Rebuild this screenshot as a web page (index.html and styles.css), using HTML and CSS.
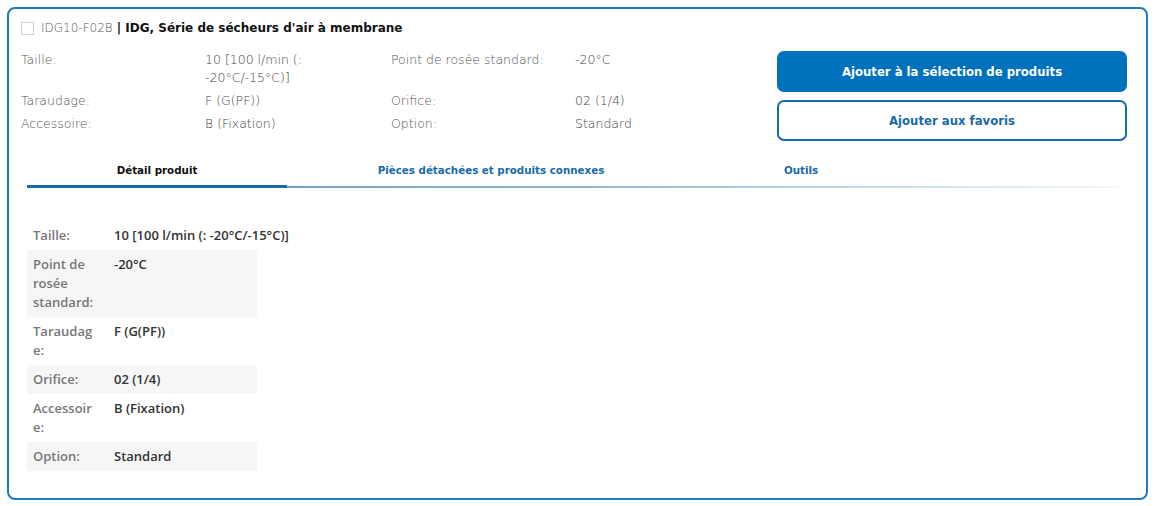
FILE: index.html
```html
<!DOCTYPE html>
<html lang="fr">
<head>
<meta charset="utf-8">
<title>IDG10-F02B</title>
<link rel="stylesheet" href="styles.css">
</head>
<body>
<div class="card">
  <div class="head">
    <span class="check"></span>
    <span class="code">IDG10-F02B</span>
    <span class="title">| IDG, Série de sécheurs d'air à membrane</span>
  </div>
  <div class="top">
    <div class="specs">
      <div class="lbl">Taille:</div><div class="val">10 [100 l/min (:<br>-20°C/-15°C)]</div>
      <div class="lbl">Point de rosée standard:</div><div class="val">-20°C</div>
      <div class="lbl">Taraudage:</div><div class="val">F (G(PF))</div>
      <div class="lbl">Orifice:</div><div class="val">02 (1/4)</div>
      <div class="lbl">Accessoire:</div><div class="val">B (Fixation)</div>
      <div class="lbl">Option:</div><div class="val">Standard</div>
    </div>
    <div class="actions">
      <button class="btn primary">Ajouter à la sélection de produits</button>
      <button class="btn secondary">Ajouter aux favoris</button>
    </div>
  </div>
  <div class="tabs">
    <div class="tab active">Détail produit</div>
    <div class="tab t2">Pièces détachées et produits connexes</div>
    <div class="tab t3">Outils</div>
  </div>
  <table class="detail">
    <tr><th>Taille:</th><td>10 [100 l/min (: -20°C/-15°C)]</td></tr>
    <tr class="alt"><th>Point de rosée standard:</th><td>-20°C</td></tr>
    <tr><th>Taraudage:</th><td>F (G(PF))</td></tr>
    <tr class="alt"><th>Orifice:</th><td>02 (1/4)</td></tr>
    <tr><th>Accessoire:</th><td>B (Fixation)</td></tr>
    <tr class="alt"><th>Option:</th><td>Standard</td></tr>
  </table>
</div>
</body>
</html>
```
FILE: styles.css
```css
* { box-sizing: border-box; }
body {
  margin: 0;
  padding: 7px;
  background: #fff;
  font-family: "DejaVu Sans", "Open Sans", sans-serif;
  color: #333;
}
.card {
  width: 1141px;
  height: 493px;
  border: 2px solid #1f7bc0;
  border-radius: 8px;
  padding: 9px 19px 0 12px;
}
.head {
  display: flex;
  align-items: center;
  height: 20px;
  font-size: 12px;
}
.check {
  width: 13px;
  height: 13px;
  border: 1px solid #d0d0d0;
  margin-right: 7px;
  background: #fff;
}
.code { color: #555; font-weight: 200; margin-right: 4px; }
.title { color: #111; font-weight: 700; }
.top {
  display: flex;
  margin-top: 13px;
}
.specs {
  display: grid;
  grid-template-columns: 184px 186px 184px 200px;
  row-gap: 5px;
  font-size: 12.5px;
  font-weight: 200;
  line-height: 18px;
  color: #555;
  align-content: start;
}
.specs .val { color: #444; }
.actions {
  margin-left: 2px;
  width: 351px;
  display: flex;
  flex-direction: column;
  gap: 8px;
}
.btn {
  height: 41px;
  border-radius: 7px;
  font-family: inherit;
  font-size: 11.7px;
  font-weight: 700;
  cursor: pointer;
}
.primary {
  background: #0071bc;
  color: #fff;
  border: none;
}
.secondary {
  background: #fff;
  color: #1a6aa8;
  border: 2px solid #1a6aa8;
}
.tabs {
  display: flex;
  margin: 17px 0 0 6px;
  width: 1093px;
  height: 30px;
  background: linear-gradient(to right, #5b93b8 0%, #8db6cf 50%, rgba(220,232,240,0.3) 100%) no-repeat bottom / 100% 2px;
}
.tab {
  font-size: 10.3px;
  font-weight: 700;
  color: #1a6aa8;
  text-align: center;
  padding-top: 6px;
}
.tab.active {
  width: 260px;
  color: #111;
  border-bottom: 3px solid #1a6aa8;
}
.tab.t2 { width: 408px; }
.tab.t3 { width: 212px; }
.detail {
  margin: 33px 0 0 6px;
  border-collapse: collapse;
  width: 230px;
  table-layout: fixed;
  font-family: "Open Sans", "DejaVu Sans", sans-serif;
  font-size: 13px;
  line-height: 19px;
}
.detail th {
  width: 81px;
  text-align: left;
  vertical-align: top;
  color: #777;
  font-weight: 600;
  padding: 5px 11px 5px 6px;
  overflow-wrap: anywhere;
}
.detail td {
  color: #333;
  font-weight: 600;
  vertical-align: top;
  padding: 5px 0 5px 6px;
  white-space: nowrap;
}
.detail tr.alt { background: #f6f6f6; }
```
